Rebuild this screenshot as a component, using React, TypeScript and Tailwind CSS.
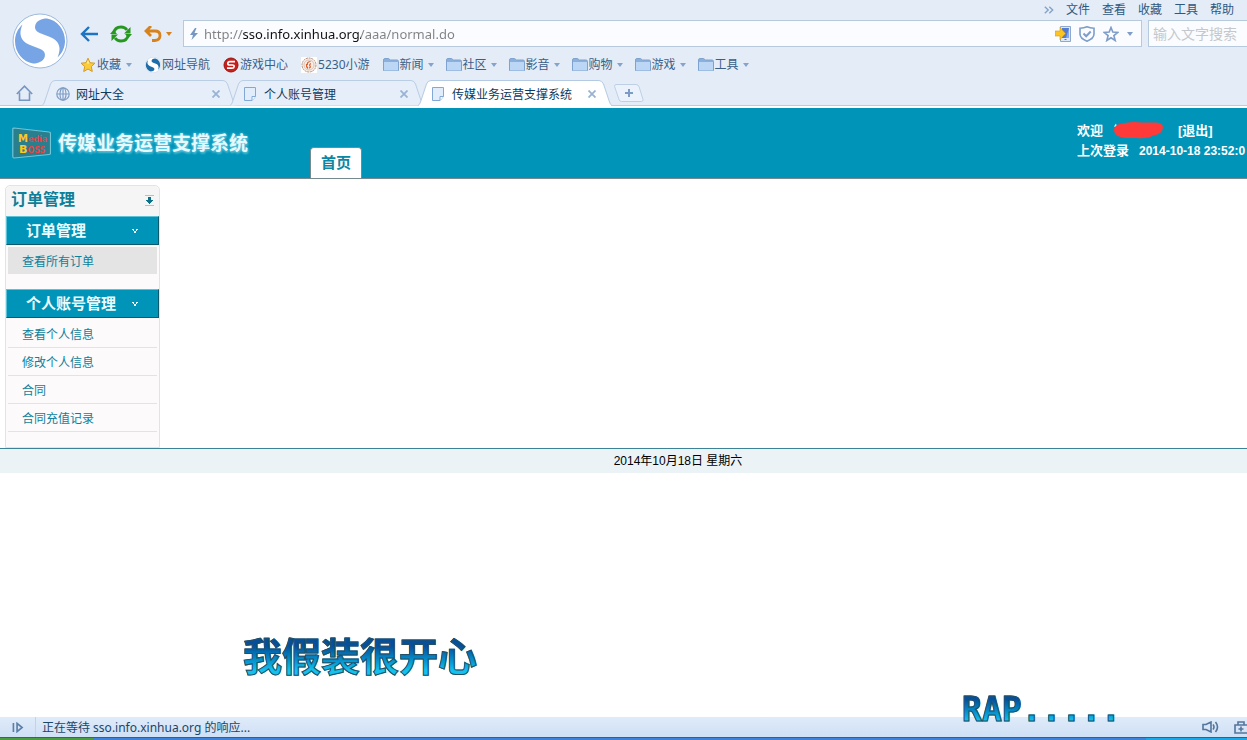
import React from "react";

const CHROME_FONT = "font-['Noto_Sans','Noto_Sans_CJK_SC',sans-serif]";
const PAGE_FONT = "font-['Liberation_Sans','Noto_Sans_CJK_SC',sans-serif]";

function Caret({ className = "" }: { className?: string }) {
  return (
    <svg viewBox="0 0 6 4" className={`h-1 w-[6px] shrink-0 ${className}`} fill="currentColor" aria-hidden="true">
      <path d="M0 0h6L3 4z" />
    </svg>
  );
}

function SogouLogo({ blue = "#77a4e4", className = "" }: { blue?: string; className?: string }) {
  return (
    <svg viewBox="0 0 56 56" className={className} aria-hidden="true">
      <circle cx="28" cy="28" r="27" fill="#fff" stroke="#9bb9dc" strokeWidth="1" />
      <g fill={blue}>
        <path d="M35 5.500C29 5.500 25 8 23.500 11.500C22 16 24 18.500 29 20.500L38 24C44 26.500 47 30 47.500 35C47.700 38 47 41 45.500 44.500C50.500 40 53 34 53 28C53 16.500 45 7 35 5.500z" />
        <path d="M21 50.500C27 50.500 31 48 32.500 44.500C34 40 32 37.500 27 35.500L18 32C12 29.500 9 26 8.500 21C8.300 18 9 15 10.500 11.500C5.500 16 3 22 3 28C3 39.500 11 49 21 50.500z" />
      </g>
    </svg>
  );
}

function StarIcon() {
  return (
    <svg viewBox="0 0 16 16" className="h-4 w-4 shrink-0" aria-hidden="true">
      <path d="M8 1.2l2 4.5 4.9.5-3.6 3.4 1 4.9L8 12l-4.3 2.5 1-4.9L1.1 6.2 6 5.7z" fill="#fccb3a" stroke="#d59c22" strokeLinejoin="round" />
      <path d="M8 3l1.3 3.4H6.6z" fill="#fff0a0" />
    </svg>
  );
}

function GameIcon() {
  return (
    <svg viewBox="0 0 16 16" className="h-4 w-4 shrink-0" aria-hidden="true">
      <circle cx="8" cy="8" r="7" fill="#c91f1b" stroke="#981410" />
      <path d="M12 4.6H7Q4.8 4.6 4.8 6.4T7 8h2.4q1.9 0 1.7 1.6T9 11.2H4" fill="none" stroke="#fff" strokeWidth="1.7" />
    </svg>
  );
}

function FlameIcon() {
  return (
    <svg viewBox="0 0 16 16" className="h-4 w-4 shrink-0" aria-hidden="true">
      <path fill="#fff" d="M0 0h16v16H0z" />
      <circle cx="8" cy="8" r="7" fill="#f8eee6" stroke="#b49280" strokeDasharray="2 .7" />
      <circle cx="8" cy="8" r="5" fill="none" stroke="#dcc0b2" />
      <path d="M9.500 4.500Q5.500 5 6.500 8M5.500 7q-.5 3 1.500 4.500M10 6.500Q8 7.500 9 9t-1 2" fill="none" stroke="#dc5a2c" strokeWidth="1.200" />
    </svg>
  );
}

function FolderIcon() {
  return (
    <svg viewBox="0 0 16 14" className="h-[14px] w-4 shrink-0" aria-hidden="true">
      <path d="M.5 12.500V2Q.5.500 2 .500h3.500L7.500 2h6.500q1.500 0 1.500 1.500v9z" fill="#8cb0dc" stroke="#7fa3cf" />
      <path d="M1 4h14v8.500H1z" fill="#bcd6f5" />
    </svg>
  );
}

function PageIcon() {
  return (
    <svg viewBox="0 0 12 14" className="h-[14px] w-3 shrink-0" aria-hidden="true">
      <path d="M.5.5h11v9L8 13.500H.5z" fill="#e1edfb" stroke="#84a8d6" />
      <path d="M8 13.500v-4h3.500" fill="#fff" stroke="#84a8d6" />
    </svg>
  );
}

function GlobeIcon() {
  return (
    <svg viewBox="0 0 14 14" className="h-[14px] w-[14px] shrink-0" fill="none" stroke="#809dc3" strokeWidth="1.2" aria-hidden="true">
      <circle cx="7" cy="7" r="6.200" />
      <ellipse cx="7" cy="7" rx="3" ry="6.200" />
      <path d="M1 7h12M7 1v12" />
    </svg>
  );
}

function BrowserTab({ icon, title, active = false }: { icon: React.ReactNode; title: string; active?: boolean }) {
  return (
    <div className={`relative -mr-[6px] flex h-[26px] w-[194px] items-center pl-[14px] pr-4 pt-[2px] ${active ? "z-10" : ""}`}>
      <svg viewBox="0 0 194 26" preserveAspectRatio="none" className="absolute inset-0 h-full w-full" aria-hidden="true">
        <path
          d="M0 25.500Q1.500 25 2.500 22L8.500 4Q10 .5 13 .5H181Q184 .5 185.500 4L191.500 22Q192.500 25 194 25.500"
          fill={active ? "#fff" : "#e6eefa"}
          stroke={active ? "#b4cae2" : "#b9cde4"}
        />
        {active && <path d="M1 25.500h192" stroke="#fff" />}
      </svg>
      <button className="relative flex grow items-center text-left text-[12px] leading-4 text-[#0d3a5e]">
        <span className="flex w-5 shrink-0">{icon}</span>
        <span className="pt-[2px]">{title}</span>
      </button>
      <button aria-label="关闭标签" className="relative text-[#98b3d4]">
        <svg viewBox="0 0 8 8" className="h-2 w-2" stroke="currentColor" strokeWidth="1.800">
          <path d="M.5.5l7 7M7.500.5l-7 7" />
        </svg>
      </button>
    </div>
  );
}

const folders = ["新闻", "社区", "影音", "购物", "游戏", "工具"];
const menus = ["文件", "查看", "收藏", "工具", "帮助"];

function BrowserChrome() {
  return (
    <header className={`border-b border-[#b9cde2] bg-[#e4ecf7] ${CHROME_FONT}`}>
      <div className="flex">
        <div className="w-20 shrink-0 pl-3 pt-[13px]">
          <SogouLogo className="h-14 w-14" />
        </div>
        <div className="min-w-0 grow">
          <nav className="flex h-5 items-center justify-end gap-3 pr-[13px] text-[12px] leading-4 text-[#2f587f]">
            <button aria-label="更多">
              <svg viewBox="0 0 10 8" className="h-2 w-[10px]" fill="none" stroke="#84a3c7" strokeWidth="1.400">
                <path d="M.8.8L4.200 4 .8 7.200M5.300.8L8.700 4 5.300 7.200" />
              </svg>
            </button>
            {menus.map((m) => (
              <button key={m}>{m}</button>
            ))}
          </nav>
          <div className="flex h-[27px] items-center">
            <div className="flex w-[103px] shrink-0 items-center">
              <button aria-label="后退">
                <svg viewBox="0 0 18 16" className="h-4 w-[18px]" fill="none" stroke="#1d74c2" strokeWidth="2.400">
                  <path d="M9 1L2 8l7 7M2 8h16" />
                </svg>
              </button>
              <button aria-label="刷新" className="ml-3">
                <svg viewBox="0 0 22 18" className="h-[18px] w-[22px]" fill="none" stroke="#27981f" strokeWidth="2.800">
                  <path d="M3.800 8Q4.800 2 11 2q4 0 6 3M18.200 10Q17.200 16 11 16q-4 0-6-3" />
                  <path d="M20.500 2v6.500H14zM1.500 16V9.500H8z" fill="#27981f" stroke="none" />
                  <path d="M0 9h7L3.500 5zM22 9h-7l3.500 4z" fill="#27981f" stroke="none" />
                </svg>
              </button>
              <button aria-label="恢复" className="ml-3 flex items-center gap-1 text-[#d8821c]">
                <svg viewBox="0 0 18 16" className="h-4 w-[18px]" fill="none" stroke="currentColor" strokeWidth="2.800">
                  <path d="M7 0L2 5l5 5M2 5h9q5 0 5 4.500T11 14.500H8" />
                </svg>
                <Caret />
              </button>
            </div>
            <label className="flex h-[27px] min-w-0 grow items-center border border-[#b6c9dd] bg-[#fafcff] pr-2">
              <svg viewBox="0 0 8 12" className="mx-[6px] h-3 w-2 shrink-0" aria-hidden="true">
                <path d="M5 0L0 7h3L1.500 12 8 5H4.500L6.500 0z" fill="#7595c3" />
              </svg>
              <input
                aria-label="地址"
                defaultValue="http://sso.info.xinhua.org/aaa/normal.do"
                className="min-w-0 grow bg-[linear-gradient(90deg,#808080_0_38px,#111_38px_157px,#808080_157px)] bg-clip-text text-[13px] leading-5 text-transparent outline-none"
              />
              <span className="flex shrink-0 items-center gap-2 text-[#7e9dc8]">
                <svg viewBox="0 0 16 16" className="h-4 w-4" aria-hidden="true">
                  <path d="M5.500.500h10v15h-10z" fill="#dce9fa" stroke="#90a9cb" />
                  <path d="M7 2h7v10H7z" fill="#527bd4" />
                  <path d="M11 12l3-10v10z" fill="#86a8ed" />
                  <path d="M9.500 13.500h2" stroke="#5077bd" />
                  <path d="M0 5h5V1.500L10.500 7.500 5 13.500V10H0z" fill="#fcc422" stroke="#d49a16" strokeWidth=".6" />
                </svg>
                <svg viewBox="0 0 16 16" className="h-4 w-4" fill="none" stroke="currentColor" strokeWidth="1.600" aria-hidden="true">
                  <path d="M8 .8Q11 2.200 15 2.200V8q0 4.500-7 7.200Q1 12.500 1 8V2.200q4 0 7-1.400z" />
                  <path d="M4.500 7.500l2.700 2.700 4.500-4.700" strokeWidth="2" />
                </svg>
                <svg viewBox="0 0 16 16" className="h-4 w-4" fill="none" stroke="currentColor" strokeWidth="1.600" aria-hidden="true">
                  <path d="M8 1.500l1.800 4.600 5 .3-3.900 3.200 1.300 4.900L8 11.800l-4.200 2.700 1.300-4.900L1.200 6.400l5-.3z" />
                </svg>
                <Caret />
              </span>
            </label>
            <input
              aria-label="搜索"
              placeholder="输入文字搜索"
              className="ml-[6px] h-[27px] w-[99px] shrink-0 border border-r-0 border-[#b6c9dd] bg-[#fafcff] pl-1 text-[14px] leading-5 outline-none placeholder:text-[#c4c8cc]"
            />
          </div>
          <nav className="flex h-[33px] items-center gap-[13px] pt-[2px] text-[12px] leading-4 text-[#3b5f87]">
            <a href="#fav" className="flex items-center gap-px">
              <StarIcon />
              收藏
              <Caret className="ml-1 text-[#86a4cb]" />
            </a>
            <a href="#nav" className="flex items-center gap-px">
              <SogouLogo blue="#1b6ea9" className="h-4 w-4" />
              网址导航
            </a>
            <a href="#game" className="flex items-center gap-px">
              <GameIcon />
              游戏中心
            </a>
            <a href="#5230" className="flex items-center gap-px">
              <FlameIcon />
              5230小游
            </a>
            <div className="flex items-center gap-3">
              {folders.map((f) => (
                <button key={f} className="flex items-center gap-px">
                  <FolderIcon />
                  {f}
                  <Caret className="ml-[3px] text-[#86a4cb]" />
                </button>
              ))}
            </div>
          </nav>
        </div>
      </div>
      <div className="-mb-px flex h-[26px] items-center">
        <button aria-label="主页" className="ml-4 mr-[9px]">
          <svg viewBox="0 0 17 16" className="h-4 w-[17px]" fill="none" stroke="#7896bf" strokeWidth="1.600">
            <path d="M.8 9L8.500 1.200 16.200 9M3.500 7.500v7.700h10V7.500" />
          </svg>
        </button>
        <BrowserTab icon={<GlobeIcon />} title="网址大全" />
        <BrowserTab icon={<PageIcon />} title="个人账号管理" />
        <BrowserTab icon={<PageIcon />} title="传媒业务运营支撑系统" active />
        <button aria-label="新标签" className="ml-2">
          <svg viewBox="0 0 30 18" className="h-[18px] w-[30px]" fill="#ebf2fb" stroke="#bdd0e6">
            <path d="M2 .5H22q2.500 0 3.200 2.500L29 15.500q.4 2-1.500 2H7.500Q5.500 17.500 5 15.500L.6 2.500Q.3.500 2 .500z" />
            <path d="M15 5v8M11 9h8" stroke="#7c9cc5" strokeWidth="2" />
          </svg>
        </button>
      </div>
    </header>
  );
}

function SiteHeader() {
  return (
    <div className="mt-[2px] flex h-[71px] items-stretch overflow-hidden border-b border-[#75898f] bg-[#0094b8]">
      <div className="flex w-[310px] shrink-0 items-center gap-[7px] pl-3">
        <svg viewBox="0 0 39 32" className="h-8 w-[39px] shrink-0" role="img" aria-label="Media BOSS">
          <path d="M2 1l35 4q1.500 0 1.500 1.500V26q0 1.500-1.500 1.500L2 31Q.8 31 .8 29.500V2Q.8 1 2 1z" fill="#297f8e" stroke="#71c5d7" strokeWidth="1.200" />
          <g className="font-['DejaVu_Sans',sans-serif]" fontWeight="bold">
            <text x="6" y="15" fontSize="10" fill="#ffc71f">M<tspan fontSize="8" fill="#e64343">edia</tspan></text>
            <text x="7" y="26" fontSize="11" fill="#ffc71f">B<tspan fontSize="8" fill="#e64343">OSS</tspan></text>
          </g>
        </svg>
        <h1 className="whitespace-nowrap pt-[2px] text-[19px] font-bold leading-6 text-[#e6f9ff] [text-shadow:0_0_3px_#6fd0e4,1px_2px_2px_#45b7cf]">传媒业务运营支撑系统</h1>
      </div>
      <nav className="flex items-end">
        <a href="#home" className="rounded-t-[4px] border border-b-0 border-[#75898f] bg-white px-[10px] pb-[5px] pt-1 text-[15px] font-bold leading-[21px] text-[#0c86a3]">
          首页
        </a>
      </nav>
      <div className="ml-auto w-[170px] shrink-0 whitespace-nowrap pt-[13px] text-[12px] font-bold leading-5 text-white">
        <div className="flex">
          <span className="text-[13px]">欢迎</span>
          <svg viewBox="0 0 50 18" className="ml-[10px] h-[18px] w-[50px]" aria-hidden="true">
            <path d="M1 5.500l2-3 1 4z" fill="#e6f9ff" />
            <path d="M1 10Q0 4 9 2.500Q18 0 29 1.500H43Q50 2 50 6q0 7-10 8.500Q34 18 24 17H12Q2 15.500 1 10z" fill="#ff3a38" />
          </svg>
          <a href="#logout" className="ml-[15px] text-[13px]">[退出]</a>
        </div>
        <div className="flex gap-[10px]">
          <span className="text-[13px]">上次登录</span>
          <span>2014-10-18 23:52:0</span>
        </div>
      </div>
    </div>
  );
}

function SectionButton({ children }: { children: string }) {
  return (
    <button className="flex h-[29px] w-full items-center border border-b-[#0a596d] border-l-[#5bc2d8] border-r-[#0a596d] border-t-[#5bc2d8] bg-[#0094b8] pl-[19px] text-left text-[15px] font-bold leading-5 text-[#e9fcff]">
      <span className="w-[105px]">{children}</span>
      <svg viewBox="0 0 8 6" className="h-[6px] w-2" fill="#e9fcff" shapeRendering="crispEdges" aria-hidden="true">
        <path d="M1 1h2v1H1zM5 1h2v1H5zM2 2h1v1H2zM5 2h1v1H5zM3 3h2v2H3z" />
      </svg>
    </button>
  );
}

const accountLinks = ["查看个人信息", "修改个人信息", "合同", "合同充值记录"];

function Sidebar() {
  return (
    <aside className="ml-[5px] mt-[6px] w-[155px] rounded-t-[5px] border border-[#e3e3e3] bg-[#fcfafb]">
      <div className="flex h-[30px] items-center justify-between rounded-t-[5px] bg-[#f5f5f5] px-[5px] pb-[2px]">
        <h2 className="text-[16px] font-bold leading-5 text-[#0e7f99]">订单管理</h2>
        <button aria-label="折叠">
          <svg viewBox="0 0 9 11" className="h-[11px] w-[9px]" shapeRendering="crispEdges">
            <path d="M0 0h9v1H0zM0 10h9v1H0z" fill="#b5bfc4" />
            <path d="M3 2h3v3h2v1H7v1H6v1H5v1H4V8H3V7H2V6H1V5h2z" fill="#0b7088" />
          </svg>
        </button>
      </div>
      <SectionButton>订单管理</SectionButton>
      <ul className="mx-[2px] mb-[15px] mt-[2px] text-[12px] leading-6 text-[#0d7f9b]">
        <li className="bg-[#e4e4e4] pl-[14px] pt-[3px]">
          <a href="#orders">查看所有订单</a>
        </li>
      </ul>
      <SectionButton>个人账号管理</SectionButton>
      <ul className="mx-[2px] mb-[15px] mt-[2px] text-[12px] leading-6 text-[#0d7f9b]">
        {accountLinks.map((t) => (
          <li key={t} className="border-b border-[#e3e3e3] pl-[14px] pt-[3px]">
            <a href="#account">{t}</a>
          </li>
        ))}
      </ul>
    </aside>
  );
}

const ART_TEXT =
  "bg-gradient-to-b from-[#064f9a] from-20% to-[#12c1ee] to-80% bg-clip-text font-bold text-transparent [-webkit-text-stroke:1px_#234f68]";

function StatusBar() {
  return (
    <footer className={`mt-auto ${CHROME_FONT}`}>
      <div className="flex h-5 items-center bg-gradient-to-b from-[#dfebfa] to-[#cfe0f5] text-[12px] leading-4 text-[#1c4566]">
        <button aria-label="切换" className="flex h-full w-[36px] shrink-0 items-center border-r border-[#bfd3ea] pl-3">
          <svg viewBox="0 0 12 12" className="h-[11px] w-3" fill="none" stroke="#5b7fa6" strokeWidth="1.800">
            <path d="M1 1v10M5 1.500v9L10.500 6z" />
          </svg>
        </button>
        <span className="ml-[6px] pt-[2px]">正在等待 sso.info.xinhua.org 的响应...</span>
        <span className="ml-auto flex items-center gap-[15px] text-[#54759c]">
          <svg viewBox="0 0 17 12" className="h-3 w-[17px]" fill="none" stroke="currentColor" strokeWidth="1.600" aria-hidden="true">
            <path d="M1 3.500h3L9 1v10L4 8.500H1zM11 3.500q2 2.500 0 5M13.500 1q4 5 0 10" />
          </svg>
          <svg viewBox="0 0 13 13" className="h-[13px] w-[13px]" fill="none" stroke="currentColor" strokeWidth="1.600" aria-hidden="true">
            <path d="M1 4h14v8H1zM4 4V1h6v3M7 5.500v5M4.500 8h5" />
          </svg>
        </span>
      </div>
      <div className="flex h-[3px] border-t border-[#23649f] bg-[#3d83dc]">
        <span className="w-[93px] bg-[#4c9c44]" />
        <span className="ml-auto w-[101px] bg-[#1ba8e8]" />
      </div>
    </footer>
  );
}

export default function App() {
  return (
    <div className={`relative flex min-h-screen flex-col overflow-hidden bg-white ${PAGE_FONT}`}>
      <BrowserChrome />
      <SiteHeader />
      <main className="flex">
        <Sidebar />
      </main>
      <div className="border-t border-[#3c8398] bg-[#ebf3f6] pl-[109px] text-center text-[12px] leading-6 text-black">
        2014年10月18日 星期六
      </div>
      <StatusBar />
      <p className={`absolute bottom-[62px] left-[243px] text-[39px] leading-10 ${ART_TEXT}`}>我假装很开心</p>
      <p className={`absolute bottom-3 right-[126px] z-10 font-['DejaVu_Sans_Mono',monospace] text-[33px] leading-9 ${ART_TEXT}`}>RAP.....</p>
    </div>
  );
}
